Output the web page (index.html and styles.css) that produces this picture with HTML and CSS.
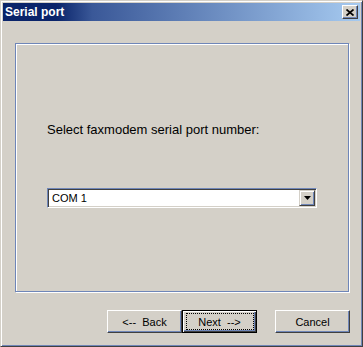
FILE: index.html
```html
<!DOCTYPE html>
<html>
<head>
<meta charset="utf-8">
<link rel="stylesheet" href="styles.css">
</head>
<body>
<div class="window">
  <div class="titlebar">
    <span class="title">Serial port</span>
    <span class="close"><svg width="8" height="7" viewBox="0 0 8 7"><path d="M0.5 0.5L7.5 6.5M7.5 0.5L0.5 6.5" stroke="#000" stroke-width="1.7" fill="none"/></svg></span>
  </div>
  <div class="client">
    <div class="panel">
      <div class="label">Select faxmodem serial port number:</div>
      <div class="combo">
        <span class="combo-text">COM 1</span>
        <span class="combo-btn"><svg width="7" height="4" viewBox="0 0 7 4"><path d="M0 0H7L3.5 4Z" fill="#000"/></svg></span>
      </div>
    </div>
    <div class="buttons">
      <button class="btn">&lt;--&nbsp;&nbsp;Back</button>
      <button class="btn default"><span class="focus">Next&nbsp;&nbsp;--&gt;</span></button>
      <button class="btn">Cancel</button>
    </div>
  </div>
</div>
</body>
</html>
```

FILE: styles.css
```css
* { box-sizing: border-box; }
html, body { margin: 0; padding: 0; background: #d4d0c8; }

.window {
  width: 363px;
  height: 347px;
  border: 1px solid;
  border-color: #d4d0c8 #404040 #404040 #d4d0c8;
  box-shadow: inset 1px 1px 0 #ffffff, inset -1px -1px 0 #6f86b8;
  padding: 2px;
  display: flex;
  flex-direction: column;
  background: #d4d0c8;
  font-family: "Liberation Sans", Arial, sans-serif;
  color: #000;
}

.titlebar {
  height: 18px;
  flex: none;
  display: flex;
  align-items: center;
  justify-content: space-between;
  padding: 0 2px 0 2px;
  background: linear-gradient(to right, #0a246a 0%, #0a246a 15%, #3a5898 25%, #a6caf0 100%);
}

.title {
  color: #fff;
  font-weight: bold;
  font-size: 12px;
  line-height: 14px;
}

.close {
  width: 16px;
  height: 14px;
  display: flex;
  align-items: center;
  justify-content: center;
  background: #d4d0c8;
  border: 1px solid;
  border-color: #ffffff #404040 #404040 #ffffff;
  box-shadow: inset -1px -1px 0 #6f86b8;
}

.client {
  flex: 1;
  display: flex;
  flex-direction: column;
  padding: 22px 10px 0 12px;
}

.panel {
  width: 334px;
  height: 249px;
  flex: none;
  border: 1px solid #6f86b8;
  box-shadow: inset 1px 1px 0 #ffffff, 1px 1px 0 #ffffff;
  padding: 78px 0 0 31px;
}

.label {
  font-size: 13px;
  line-height: 15px;
}

.combo {
  margin-top: 51px;
  width: 270px;
  height: 20px;
  background: #fff;
  border: 1px solid;
  border-color: #6f86b8 #ffffff #ffffff #6f86b8;
  box-shadow: inset 1px 1px 0 #404040, inset -1px -1px 0 #d4d0c8;
  padding: 1px;
  display: flex;
  align-items: center;
  justify-content: space-between;
}

.combo-text {
  font-size: 11px;
  line-height: 16px;
  padding-left: 3px;
}

.combo-btn {
  width: 16px;
  height: 16px;
  display: flex;
  align-items: center;
  justify-content: center;
  background: #d4d0c8;
  border: 1px solid;
  border-color: #d4d0c8 #404040 #404040 #d4d0c8;
  box-shadow: inset 1px 1px 0 #ffffff, inset -1px -1px 0 #6f86b8;
}

.buttons {
  margin-top: 18px;
  display: flex;
  justify-content: flex-end;
}

.btn {
  width: 75px;
  height: 23px;
  margin: 0;
  padding: 1px 0 0 0;
  background: #d4d0c8;
  border: 1px solid;
  border-color: #ffffff #404040 #404040 #ffffff;
  box-shadow: inset -1px -1px 0 #6f86b8;
  font-family: "Liberation Sans", Arial, sans-serif;
  font-size: 11px;
  line-height: 13px;
  color: #000;
  white-space: pre;
  position: relative;
}

.btn.default {
  border: 1px solid #000;
  box-shadow: inset 1px 1px 0 #ffffff, inset -1px -1px 0 #404040, inset -2px -2px 0 #6f86b8;
  margin-right: 18px;
}

.focus::after {
  content: "";
  position: absolute;
  left: 3px;
  right: 2px;
  top: 2px;
  bottom: 2px;
  border: 1px dotted #000;
}
```
